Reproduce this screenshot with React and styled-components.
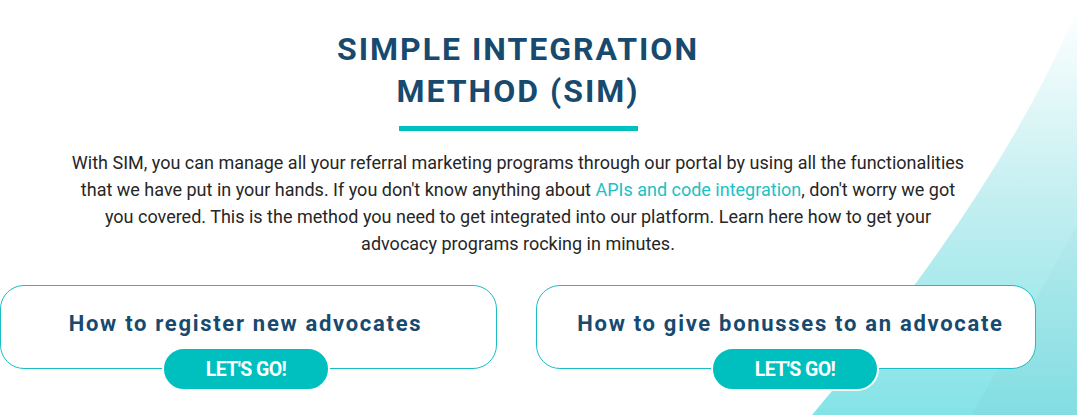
import React from "react";
import styled, { createGlobalStyle } from "styled-components";

const Global = createGlobalStyle`
  html, body { margin: 0; padding: 0; background: #ffffff; }
  body { font-family: Roboto, "Liberation Sans", Arial, sans-serif; }
  * { box-sizing: border-box; }
`;

const Page = styled.div`
  position: relative;
  width: 1077px;
  height: 415px;
  overflow: hidden;
  background: #ffffff;
`;

const Backdrop = styled.svg`
  position: absolute;
  inset: 0;
  width: 1077px;
  height: 415px;
  z-index: 0;
`;

const Content = styled.main`
  position: relative;
  z-index: 1;
  width: 1036px;
  display: flex;
  flex-direction: column;
  align-items: center;
  padding-top: 28px;
`;

const Title = styled.h1`
  margin: 0;
  font-family: Roboto, "Liberation Sans", sans-serif;
  font-weight: 700;
  font-size: 32px;
  line-height: 42px;
  letter-spacing: 2px;
  color: #174a6e;
  text-align: center;
`;

const Bar = styled.div`
  width: 239px;
  height: 5px;
  margin-top: 14px;
  background: #00bfbf;
`;

const Lead = styled.p`
  margin: 18px 0 0;
  font-family: Roboto, "Liberation Sans", sans-serif;
  font-size: 18px;
  line-height: 27px;
  color: #262626;
  text-align: center;
  white-space: nowrap;
`;

const Link = styled.a`
  color: #1cc1c4;
  text-decoration: none;
`;

const Cards = styled.div`
  margin-top: 28px;
  width: 100%;
  display: grid;
  grid-template-columns: 497px 500px;
  column-gap: 39px;
`;

const Card = styled.div`
  height: 84px;
  border: 1px solid #1cbcc4;
  border-radius: 24px;
  background: #ffffff;
  padding-top: 24px;
  display: flex;
  flex-direction: column;
  align-items: center;
`;

const CardTitle = styled.h2`
  flex-shrink: 0;
  margin: 0 0 9px;
  font-family: Roboto, "Liberation Sans", sans-serif;
  font-weight: 700;
  font-size: 22px;
  line-height: 28px;
  letter-spacing: 1.7px;
  color: #174a6e;
  white-space: nowrap;
  margin-left: ${(p) => p.$offset}px;
`;

const GoButton = styled.button`
  flex-shrink: 0;
  width: 168px;
  height: 44px;
  padding: 0;
  border: 2px solid #ffffff;
  border-radius: 22px;
  background: #00bfbf;
  color: #ffffff;
  font-family: Roboto, "Liberation Sans", sans-serif;
  font-weight: 700;
  font-size: 19.5px;
  letter-spacing: -0.6px;
  cursor: pointer;
  margin-left: ${(p) => p.$offset}px;
`;

const items = [
  { title: "How to register new advocates", titleOffset: -6, btnOffset: -5 },
  { title: "How to give bonusses to an advocate", titleOffset: 9, btnOffset: 18 },
];

export default function App() {
  return (
    <>
      <Global />
      <Page>
        <Backdrop viewBox="0 0 1077 415" aria-hidden="true">
          <defs>
            <linearGradient id="bgA" x1="0" y1="0" x2="0" y2="1">
              <stop offset="0" stopColor="#ffffff" />
              <stop offset="0.45" stopColor="#c6eff1" />
              <stop offset="1" stopColor="#84e3e7" />
            </linearGradient>
            <linearGradient id="bgB" x1="0" y1="0" x2="0" y2="1">
              <stop offset="0" stopColor="#b2e8ec" />
              <stop offset="1" stopColor="#80dade" />
            </linearGradient>
          </defs>
          <path d="M1077 8 Q1005 185 812 415 L1077 415 Z" fill="url(#bgA)" />
          <path d="M1077 225 L972 415 L1077 415 Z" fill="url(#bgB)" opacity="0.6" />
        </Backdrop>
        <Content>
          <Title>
            SIMPLE INTEGRATION
            <br />
            METHOD (SIM)
          </Title>
          <Bar />
          <Lead>
            With SIM, you can manage all your referral marketing programs through our portal by using all the functionalities
            <br />
            that we have put in your hands. If you don't know anything about{" "}
            <Link href="#">APIs and code integration</Link>, don't worry we got
            <br />
            you covered. This is the method you need to get integrated into our platform. Learn here how to get your
            <br />
            advocacy programs rocking in minutes.
          </Lead>
          <Cards>
            {items.map((it) => (
              <Card key={it.title}>
                <CardTitle $offset={it.titleOffset}>{it.title}</CardTitle>
                <GoButton $offset={it.btnOffset}>LET'S GO!</GoButton>
              </Card>
            ))}
          </Cards>
        </Content>
      </Page>
    </>
  );
}
